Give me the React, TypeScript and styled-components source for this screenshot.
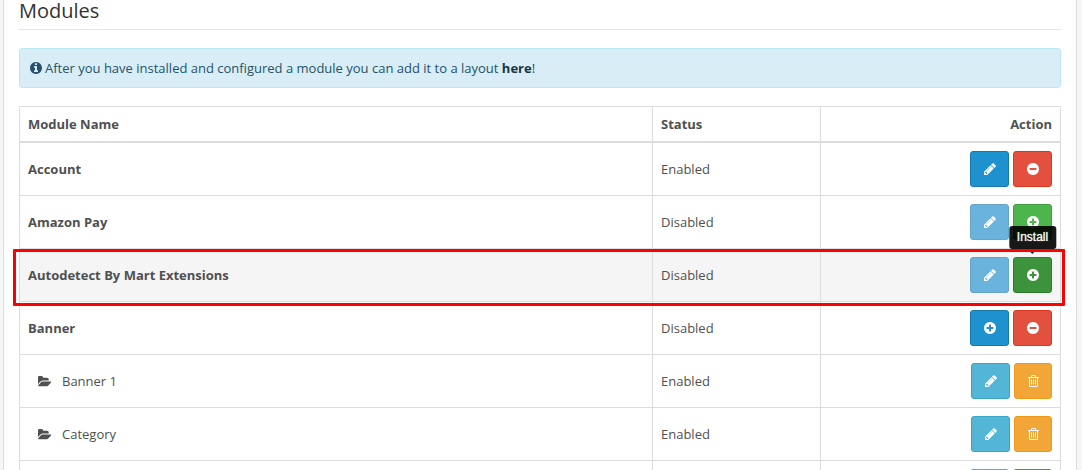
import React from "react";
import styled, { createGlobalStyle, css } from "styled-components";

const GlobalStyle = createGlobalStyle`
  *, *::before, *::after { box-sizing: border-box; }
  html { height: 100%; }
  body {
    margin: 0;
    height: 100%;
    overflow: hidden;
    background: #f6f6f6;
    color: #505050;
    font-family: "Open Sans", "Noto Sans", sans-serif;
    font-size: 13px;
    line-height: 18px;
  }
  #root { height: 100%; overflow: hidden; }
`;

const DISC =
  "q0 209-103 385.5t-279.5 279.5-385.5 103-385.5-103-279.5-279.5-103-385.5 103-385.5 279.5-279.5 385.5-103 385.5 103 279.5 279.5 103 385.5z";

const icons = {
  pencil: {
    box: "128 0 1536 1792",
    width: 12,
    height: 14,
    d: "M491 1536l91-91-235-235-91 91v107h128v128h107zm523-928q0-22-22-22-10 0-17 7l-542 542q-7 7-7 17 0 22 22 22 10 0 17-7l542-542q7-7 7-17zm-54-192l416 416-832 832h-416v-416zm683 96q0 53-37 90l-166 166-416-416 166-165q36-38 90-38 53 0 91 38l235 234q37 39 37 91z",
  },
  plus: {
    box: "128 0 1536 1792",
    width: 12,
    height: 14,
    d:
      "M1344 960v-128q0-26-19-45t-45-19h-256v-256q0-26-19-45t-45-19h-128q-26 0-45 19t-19 45v256h-256q-26 0-45 19t-19 45v128q0 26 19 45t45 19h256v256q0 26 19 45t45 19h128q26 0 45-19t19-45v-256h256q26 0 45-19t19-45zm320-64" +
      DISC,
  },
  minus: {
    box: "128 0 1536 1792",
    width: 12,
    height: 14,
    d:
      "M1344 960v-128q0-26-19-45t-45-19h-768q-26 0-45 19t-19 45v128q0 26 19 45t45 19h768q26 0 45-19t19-45zm320-64" +
      DISC,
  },
  trash: {
    box: "192 0 1408 1792",
    width: 11,
    height: 14,
    d: "M704 736v576q0 14-9 23t-23 9h-64q-14 0-23-9t-9-23v-576q0-14 9-23t23-9h64q14 0 23 9t9 23zm256 0v576q0 14-9 23t-23 9h-64q-14 0-23-9t-9-23v-576q0-14 9-23t23-9h64q14 0 23 9t9 23zm256 0v576q0 14-9 23t-23 9h-64q-14 0-23-9t-9-23v-576q0-14 9-23t23-9h64q14 0 23 9t9 23zm128 724v-948h-896v948q0 22 7 40.5t14.5 27 10.5 8.5h832q3 0 10.5-8.5t14.5-27 7-40.5zm-672-1076h448l-48-117q-7-9-17-11h-317q-10 2-17 11zm928 32v64q0 14-9 23t-23 9h-96v948q0 83-47 143.5t-113 60.5h-832q-66 0-113-58.5t-47-141.5v-952h-96q-14 0-23-9t-9-23v-64q0-14 9-23t23-9h309l70-167q15-37 54-63t79-26h320q40 0 79 26t54 63l70 167h309q14 0 23 9t9 23z",
  },
  folder: {
    box: "0 0 1920 1792",
    width: 14,
    height: 13,
    d: "M1815 952q0 31-31 66l-336 396q-43 51-120.5 86.5t-143.5 35.5h-1088q-34 0-60.5-13t-26.5-43q0-31 31-66l336-396q43-51 120.5-86.5t143.5-35.5h1088q34 0 60.5 13t26.5 43zm-343-344v160h-832q-94 0-197 47.5t-164 119.5l-337 396-5 6q0-4-.5-12.5t-.5-12.5v-960q0-92 66-158t158-66h320q92 0 158 66t66 158v32h544q92 0 158 66t66 158z",
  },
  info: {
    box: "128 0 1536 1792",
    width: 12,
    height: 14,
    d:
      "M1152 1376v-160q0-14-9-23t-23-9h-96v-512q0-14-9-23t-23-9h-320q-14 0-23 9t-9 23v160q0 14 9 23t23 9h96v320h-96q-14 0-23 9t-9 23v160q0 14 9 23t23 9h448q14 0 23-9t9-23zm-128-896v-160q0-14-9-23t-23-9h-192q-14 0-23 9t-9 23v160q0 14 9 23t23 9h192q14 0 23-9t9-23zm640 416" +
      DISC,
  },
};

type IconName = keyof typeof icons;

const Glyph = styled.svg`
  display: block;
  flex: none;
  fill: currentColor;
`;

const Icon = ({ name }: { name: IconName }) => (
  <Glyph
    width={icons[name].width}
    height={icons[name].height}
    viewBox={icons[name].box}
    aria-hidden="true"
  >
    <path d={icons[name].d} />
  </Glyph>
);

const Panel = styled.main`
  min-height: 100%;
  margin: 0 5px 0 3px;
  padding: 0 15px;
  border: solid #dcdcdc;
  border-width: 0 1px;
  background: #fff;
`;

const Legend = styled.h1`
  margin: 0 0 18px;
  padding-bottom: 8px;
  border-bottom: 1px solid #e5e5e5;
  color: #333;
  font-size: 20px;
  font-weight: 400;
  line-height: 21px;
`;

const Alert = styled.div`
  display: flex;
  align-items: center;
  gap: 3px;
  margin-bottom: 18px;
  padding: 10px;
  border: 1px solid #bce8f1;
  border-radius: 3px;
  background: #d9edf7;
  color: #24526a;
`;

const AlertLink = styled.a`
  color: #173544;
  font-weight: 700;
  text-decoration: none;
`;

const Table = styled.table`
  width: 100%;
  table-layout: fixed;
  border-collapse: collapse;
`;

const Column = styled.col<{ $width?: number }>`
  ${({ $width }) => $width && css`width: ${$width}px;`}
`;

const HeadCell = styled.th<{ $right?: boolean }>`
  padding: 8px;
  border: 1px solid #ddd;
  border-bottom-width: 2px;
  font-weight: 700;
  text-align: ${({ $right }) => ($right ? "right" : "left")};
`;

const Row = styled.tr<{ $hover?: boolean }>`
  position: relative;
  background: ${({ $hover }) => ($hover ? "#f5f5f5" : "#fff")};
`;

const Cell = styled.td`
  padding: 8px;
  border: 1px solid #ddd;
  vertical-align: middle;
`;

const ModuleName = styled.span<{ $child?: boolean }>`
  display: flex;
  align-items: center;
  gap: 10px;
  font-weight: ${({ $child }) => ($child ? 400 : 700)};
  padding-left: ${({ $child }) => ($child ? 10 : 0)}px;
`;

const Actions = styled.div`
  display: flex;
  justify-content: flex-end;
  gap: 4px;
`;

const tones = {
  primary: ["#1e91cf", "#1978ab"],
  muted: ["#6ab3dd", "#67a4ca"],
  danger: ["#e3503e", "#dc3522"],
  success: ["#4cb64c", "#409c40"],
  pressed: ["#3c933c", "#2e7d2e"],
  info: ["#54b6d6", "#38a4c6"],
  warning: ["#f3a638", "#f09a1a"],
};

type Tone = keyof typeof tones;

const ActionButton = styled.button<{ $tone: Tone }>`
  display: flex;
  align-items: center;
  height: 36px;
  padding: 0 12px 0 13px;
  border: 1px solid ${({ $tone }) => tones[$tone][1]};
  border-radius: 3px;
  background: ${({ $tone }) => tones[$tone][0]};
  color: #fff;
  cursor: pointer;
`;

const TooltipAnchor = styled.div`
  position: relative;
`;

const Tooltip = styled.span`
  position: absolute;
  z-index: 2;
  bottom: calc(100% + 8px);
  left: 50%;
  transform: translateX(-50%);
  padding: 3px 8px;
  border-radius: 3px;
  background: #000;
  opacity: 0.9;
  color: #fff;
  font-family: "Liberation Sans", Arial, sans-serif;
  font-size: 12px;
  line-height: 17px;
  text-shadow: 0 0 1px #fff;

  &::after {
    content: "";
    position: absolute;
    top: 100%;
    left: 50%;
    margin-left: -5px;
    border: solid transparent;
    border-width: 5px 5px 0;
    border-top-color: #000;
  }
`;

const Marker = styled.span`
  position: absolute;
  z-index: 3;
  inset: 0 -4px -4px -7px;
  border: 3px solid #f00;
  border-radius: 1px;
  pointer-events: none;
`;

interface Action {
  label: string;
  icon: IconName;
  tone: Tone;
  tip?: boolean;
}

const edit: Action = { label: "Edit", icon: "pencil", tone: "primary" };
const editOff: Action = { label: "Edit", icon: "pencil", tone: "muted" };
const editChild: Action = { label: "Edit", icon: "pencil", tone: "info" };
const add: Action = { label: "Add module", icon: "plus", tone: "primary" };
const install: Action = { label: "Install", icon: "plus", tone: "success" };
const installActive: Action = { label: "Install", icon: "plus", tone: "pressed", tip: true };
const uninstall: Action = { label: "Uninstall", icon: "minus", tone: "danger" };
const remove: Action = { label: "Delete", icon: "trash", tone: "warning" };

interface Module {
  name: string;
  status: "Enabled" | "Disabled";
  child?: boolean;
  active?: boolean;
  actions: Action[];
}

const modules: Module[] = [
  { name: "Account", status: "Enabled", actions: [edit, uninstall] },
  { name: "Amazon Pay", status: "Disabled", actions: [editOff, install] },
  {
    name: "Autodetect By Mart Extensions",
    status: "Disabled",
    active: true,
    actions: [editOff, installActive],
  },
  { name: "Banner", status: "Disabled", actions: [add, uninstall] },
  { name: "Banner 1", status: "Enabled", child: true, actions: [editChild, remove] },
  { name: "Category", status: "Enabled", child: true, actions: [editChild, remove] },
];

const ActionItem = ({ action }: { action: Action }) => (
  <TooltipAnchor>
    <ActionButton type="button" $tone={action.tone} aria-label={action.label}>
      <Icon name={action.icon} />
    </ActionButton>
    {action.tip && <Tooltip role="tooltip">{action.label}</Tooltip>}
  </TooltipAnchor>
);

const ActionList = ({ actions }: { actions: Action[] }) => (
  <Actions>
    {actions.map((action) => (
      <ActionItem key={action.label} action={action} />
    ))}
  </Actions>
);

export default function App() {
  return (
    <>
      <GlobalStyle />
      <Panel>
        <Legend>Modules</Legend>
        <Alert>
          <Icon name="info" />
          <span>
            After you have installed and configured a module you can add it to a layout{" "}
            <AlertLink href="#layouts">here</AlertLink>!
          </span>
        </Alert>
        <Table>
          <colgroup>
            <Column />
            <Column $width={168} />
            <Column $width={240} />
          </colgroup>
          <thead>
            <tr>
              <HeadCell scope="col">Module Name</HeadCell>
              <HeadCell scope="col">Status</HeadCell>
              <HeadCell scope="col" $right>
                Action
              </HeadCell>
            </tr>
          </thead>
          <tbody>
            {modules.map((module) => (
              <Row key={module.name} $hover={module.active}>
                <Cell>
                  <ModuleName $child={module.child}>
                    {module.child && <Icon name="folder" />}
                    {module.name}
                  </ModuleName>
                  {module.active && <Marker />}
                </Cell>
                <Cell>{module.status}</Cell>
                <Cell>
                  <ActionList actions={module.actions} />
                </Cell>
              </Row>
            ))}
            <Row>
              <Cell />
              <Cell />
              <Cell>
                <ActionList actions={[editOff, install]} />
              </Cell>
            </Row>
          </tbody>
        </Table>
      </Panel>
    </>
  );
}
